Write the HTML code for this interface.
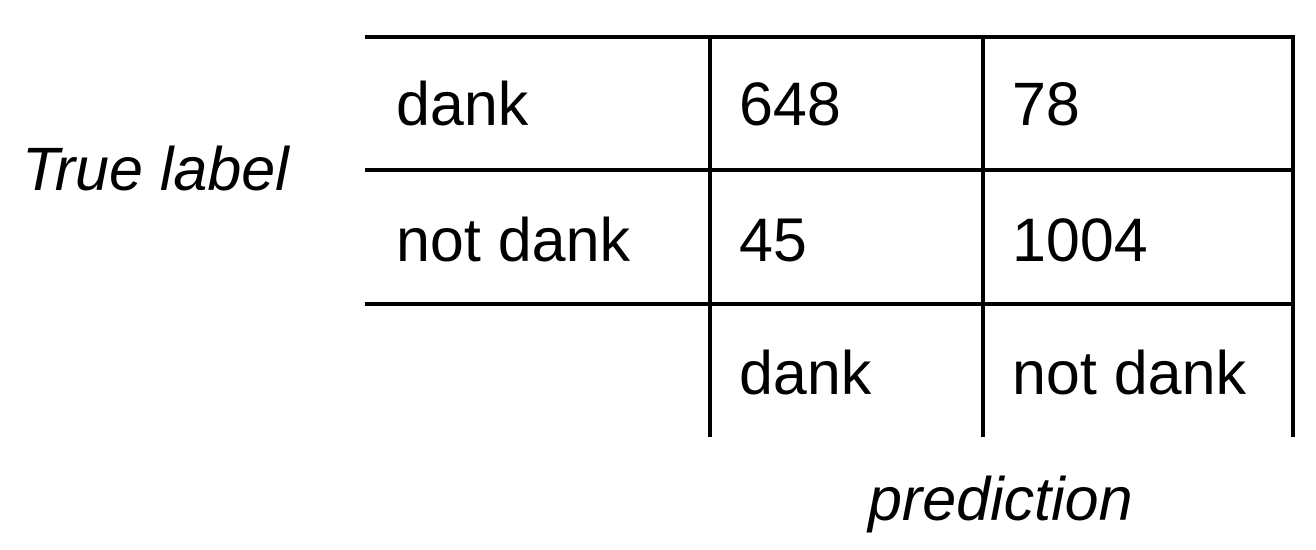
<!DOCTYPE html>
<html><head><style>
body{margin:0;width:1316px;height:550px;background:#fff;position:relative;overflow:hidden;font-family:"Liberation Sans",Arial,sans-serif;color:#000}
.l{position:absolute;background:#000}
.t{position:absolute;font-size:61px;line-height:1;white-space:nowrap}
.i{font-style:italic}
</style></head><body>
<div class="l" style="left:365px;top:35px;width:930px;height:4px"></div>
<div class="l" style="left:365px;top:168px;width:930px;height:4px"></div>
<div class="l" style="left:365px;top:302px;width:930px;height:4px"></div>
<div class="l" style="left:708px;top:37px;width:4px;height:400px"></div>
<div class="l" style="left:981px;top:37px;width:4px;height:400px"></div>
<div class="l" style="left:1291px;top:35px;width:4px;height:402px"></div>
<div class="t" style="left:396px;top:74px">dank</div>
<div class="t" style="left:739px;top:74px">648</div>
<div class="t" style="left:1012px;top:74px">78</div>
<div class="t" style="left:396px;top:210px">not dank</div>
<div class="t" style="left:739px;top:210px">45</div>
<div class="t" style="left:1012px;top:210px">1004</div>
<div class="t" style="left:739px;top:343px">dank</div>
<div class="t" style="left:1012px;top:343px">not dank</div>
<div class="t i" style="left:22px;top:139px">True label</div>
<div class="t i" style="left:868px;top:469px">prediction</div>
</body></html>
